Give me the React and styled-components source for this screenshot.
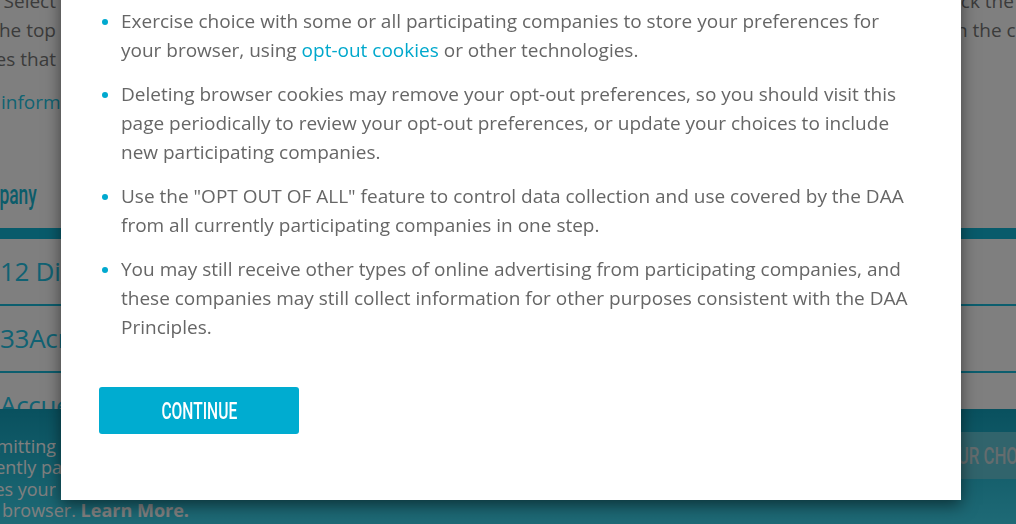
import React from 'react';
import styled, { createGlobalStyle } from 'styled-components';

const GlobalStyle = createGlobalStyle`
  html, body {
    margin: 0;
    padding: 0;
    height: 100%;
    overflow: hidden;
    background: #fff;
  }
  body {
    font-family: "Open Sans", "Noto Sans", sans-serif;
  }
`;

const Page = styled.div`
  width: 1016px;
  height: 524px;
  overflow: hidden;
  background: #fff;
`;

const Intro = styled.div`
  margin-top: -13px;
  font-size: 19px;
  line-height: 29px;
  color: #777;
`;

const IntroRow = styled.div`
  display: grid;
  grid-template-columns: 56px 1fr 60px;
`;

const Clip = styled.div`
  display: flex;
  justify-content: ${({ $align }) => ($align === 'end' ? 'flex-end' : 'flex-start')};
  width: ${({ $width }) => ($width ? `${$width}px` : 'auto')};
  overflow: hidden;
  white-space: nowrap;
`;

const InfoLink = styled.a`
  display: block;
  margin-top: 14px;
  padding-left: 1px;
  font-size: 19px;
  line-height: 29px;
  color: #22c6e4;
  text-decoration: none;
  white-space: nowrap;
`;

const Table = styled.div`
  margin-top: 61px;
`;

const TableHead = styled.div`
  height: 50px;
  border-bottom: 11px solid #10b6d6;
  line-height: 40px;
`;

const Squeeze = styled.span`
  display: inline-block;
  transform: scaleX(${({ $scale }) => $scale || 0.65});
  transform-origin: ${({ $origin }) => $origin || 'center'};
`;

const HeadLabel = styled.div`
  display: flex;
  justify-content: flex-end;
  width: 37px;
  overflow: hidden;
  white-space: nowrap;
  font: 500 28px "Roboto", sans-serif;
  color: #16b8d4;
`;

const CompanyRow = styled.div`
  height: 65px;
  border-bottom: 2px solid #18bcdc;
  font-size: 26px;
  letter-spacing: -0.3px;
  line-height: 65px;
  color: #22c4e6;
  white-space: nowrap;
`;

const Banner = styled.div`
  position: fixed;
  left: 0;
  right: 0;
  bottom: 0;
  height: 115px;
  display: flex;
  justify-content: space-between;
  align-items: flex-start;
  box-sizing: border-box;
  padding-top: 27px;
  background: linear-gradient(#12a2be, #3dd4ec);
  overflow: hidden;
`;

const BannerText = styled.div`
  font-size: 18px;
  line-height: 21.3px;
  color: #fff;

  b {
    font-weight: 700;
  }
`;

const ChoicesButton = styled.button`
  margin-top: -4px;
  margin-right: -92px;
  height: 47px;
  padding: 0 30px;
  border: 0;
  background: #62c8d8;
  color: #c8d8dc;
  font: 500 24px "Roboto", sans-serif;
  white-space: nowrap;
`;

const Overlay = styled.div`
  position: fixed;
  inset: 0;
  background: rgba(0, 0, 0, 0.5);
  z-index: 10;
`;

const Modal = styled.div`
  position: fixed;
  left: 61px;
  bottom: 24px;
  width: 900px;
  box-sizing: border-box;
  padding: 60px 43px 66px 38px;
  background: #fff;
  box-shadow: 0 5px 15px rgba(0, 0, 0, 0.5);
  z-index: 11;
`;

const Points = styled.ul`
  list-style: none;
  margin: 0;
  padding: 0;
`;

const Point = styled.li`
  position: relative;
  padding-left: 22px;
  margin-bottom: 15px;
  font-size: 19px;
  line-height: 29px;
  color: #666;

  &:last-child {
    margin-bottom: 0;
  }

  &::before {
    content: "";
    position: absolute;
    left: 3px;
    top: 11.5px;
    width: 6px;
    height: 6px;
    border-radius: 50%;
    background: #00a9cf;
  }

  a {
    color: #00a8cc;
    text-decoration: none;
  }
`;

const ContinueButton = styled.button`
  display: flex;
  align-items: center;
  justify-content: center;
  width: 200px;
  height: 47px;
  margin-top: 45px;
  padding: 0;
  border: 0;
  border-radius: 3px;
  background: #00acd0;
  color: #fff;
  font: 500 24px "Roboto", sans-serif;
  cursor: pointer;
`;

const introLines = [
  ['To opt out, Select', 'ick the button'],
  ['the top', 'n the choices'],
  ['companies that', ''],
];

const companies = ['12 Digital', '33Across', 'Accuen'];

const bannerLines = [
  { text: 'By submitting', width: 56 },
  { text: 'currently pa', width: 62 },
  { text: 'changes your', width: 56 },
  { text: 'this browser.', learn: true, width: 189 },
];

const points = [
  <>
    Exercise choice with some or all participating companies to store your preferences for your
    browser, using <a href="#">opt-out cookies</a> or other technologies.
  </>,
  <>
    Deleting browser cookies may remove your opt-out preferences, so you should visit this page
    periodically to review your opt-out preferences, or update your choices to include new
    participating companies.
  </>,
  <>
    Use the "OPT OUT OF ALL" feature to control data collection and use covered by the DAA from all
    currently participating companies in one step.
  </>,
  <>
    You may still receive other types of online advertising from participating companies, and these
    companies may still collect information for other purposes consistent with the DAA Principles.
  </>,
];

export default function App() {
  return (
    <>
      <GlobalStyle />
      <Page>
        <Intro>
          {introLines.map(([left, right], i) => (
            <IntroRow key={i}>
              <Clip $align="end">{left}</Clip>
              <span />
              <Clip>{right}</Clip>
            </IntroRow>
          ))}
        </Intro>
        <InfoLink href="#">information about how this works</InfoLink>

        <Table>
          <TableHead>
            <HeadLabel>
              <Squeeze $scale={0.62} $origin="right center">Company</Squeeze>
            </HeadLabel>
          </TableHead>
          {companies.map((name) => (
            <CompanyRow key={name}>{name}</CompanyRow>
          ))}
        </Table>
      </Page>

      <Banner>
        <BannerText>
          {bannerLines.map((line) => (
            <Clip key={line.text} $align="end" $width={line.width}>
              <span>
                {line.text}
                {line.learn && (
                  <>
                    {' '}
                    <b>Learn More.</b>
                  </>
                )}
              </span>
            </Clip>
          ))}
        </BannerText>
        <ChoicesButton>
          <Squeeze $scale={0.7}>YOUR CHOICES</Squeeze>
        </ChoicesButton>
      </Banner>

      <Overlay />

      <Modal role="dialog">
        <Points>
          {points.map((content, i) => (
            <Point key={i}>{content}</Point>
          ))}
        </Points>
        <ContinueButton>
          <Squeeze $scale={0.65}>CONTINUE</Squeeze>
        </ContinueButton>
      </Modal>
    </>
  );
}
